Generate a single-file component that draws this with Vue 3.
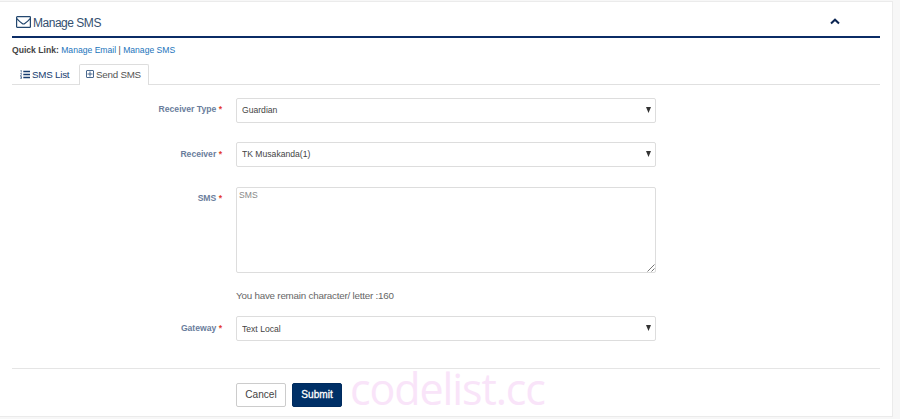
<script setup>
import { ref } from 'vue'

const receiverTypes = ['Guardian']
const receivers = ['TK Musakanda(1)']
const gateways = ['Text Local']
const message = ref('')
</script>

<template>
  <main class="panel">
    <header class="title">
      <svg class="mail" viewBox="0 0 15 12"><rect x=".6" y=".6" width="13.8" height="10.800" rx=".7" /><path d="M.8 2.700C2.500 4.800 4.500 6.300 6.200 7.500q1.300 1 2.600 0C10.500 6.300 12.500 4.800 14.200 2.700" /></svg>
      <h1>Manage SMS</h1>
      <svg class="chevron" viewBox="0 0 10 7"><path d="M1 5.500 5 1.700 9 5.500" /></svg>
    </header>
    <nav class="quick"><b>Quick Link:</b> <a>Manage Email</a> | <a>Manage SMS</a></nav>
    <nav class="tabs">
      <a class="tab">
        <svg class="list" viewBox="0 0 10 9"><path d="M3.300 1.500H10M3.300 4.500H10M3.300 7.500H10" /><path class="thin" d="M.5.7 1.300.3V2.500M.3 3.500H1.500V4.300L.3 5.500H1.600M.3 6.500H1.500V8.500H.3M.6 7.500H1.500" /></svg>
        SMS List
      </a>
      <a class="tab active">
        <svg class="plus" viewBox="0 0 8 8"><rect x=".5" y=".5" width="7" height="7" rx=".5" /><path d="M1.500 4H6.500M4 1.500V6.500" /></svg>
        Send SMS
      </a>
    </nav>
    <form @submit.prevent>
      <div class="row">
        <label>Receiver Type <i>*</i></label>
        <div class="select"><select><option v-for="o in receiverTypes" :key="o">{{ o }}</option></select><svg viewBox="0 0 5 6"><path d="M0 0H5L2.500 6Z" /></svg></div>
      </div>
      <div class="row second">
        <label>Receiver <i>*</i></label>
        <div class="select"><select><option v-for="o in receivers" :key="o">{{ o }}</option></select><svg viewBox="0 0 5 6"><path d="M0 0H5L2.500 6Z" /></svg></div>
      </div>
      <div class="row third">
        <label>SMS <i>*</i></label>
        <div class="area">
          <textarea v-model="message" placeholder="SMS"></textarea>
          <svg viewBox="0 0 8 8"><path d="M.5 7.500 7.500.500M4.500 7.500 7.500 4.500" /></svg>
        </div>
      </div>
      <p class="remain">You have remain character/ letter :160</p>
      <div class="row fourth">
        <label>Gateway <i>*</i></label>
        <div class="select"><select><option v-for="o in gateways" :key="o">{{ o }}</option></select><svg viewBox="0 0 5 6"><path d="M0 0H5L2.500 6Z" /></svg></div>
      </div>
      <footer>
        <button type="button">Cancel</button>
        <button class="submit">Submit</button>
        <span class="mark">codelist.cc</span>
      </footer>
    </form>
  </main>
</template>

<style>
body { background: #f7f7f7; }
</style>

<style scoped>
* { box-sizing: border-box; }
svg { fill: none; flex: none; }
.panel {
  width: 893px; height: 416px; margin-top: 1px; padding: 1px 12px 0;
  border: 1px solid #ebebeb; border-left: 0; background: #fff;
  font: 8.6px "Liberation Sans", Arial, sans-serif; color: #555;
  display: flex; flex-direction: column;
}
.title { height: 35px; display: flex; align-items: center; border-bottom: 2px solid #0b2c66; padding: 5px 40px 0 4px; color: #34506f; }
.mail { width: 15px; height: 12px; stroke: #23476f; stroke-width: 1.2; margin-right: 2px; }
h1 { margin: 2px 0 0; font-size: 12px; letter-spacing: -.48px; font-weight: 400; }
.chevron { width: 10px; height: 7px; margin: -1px 0 0 auto; stroke: #0b2552; stroke-width: 2; }
.quick { height: 26px; line-height: 24px; white-space: nowrap; color: #444; }
.quick a { color: #1c74bb; }
.tabs { height: 21px; display: flex; border-bottom: 1px solid #e0e0e0; font-size: 9.8px; letter-spacing: -.24px; }
.tab { height: 21px; width: 67px; display: flex; align-items: center; gap: 2px; padding: 0 0 1px 8px; color: #173d70; white-space: nowrap; }
.active { width: 70px; padding: 0 0 2px 6px; background: #fff; color: #555; border: 1px solid #ddd; border-bottom: 0; border-radius: 2px 2px 0 0; }
.list { width: 10px; height: 9px; stroke: #173d70; stroke-width: 1.4; }
.thin { stroke-width: .6; }
.plus { width: 8px; height: 8px; stroke: #355882; stroke-width: .9; }
form { padding-top: 13px; }
.row { display: flex; gap: 14px; }
label { width: 210px; text-align: right; font-size: 8.6px; font-weight: 700; line-height: 12px; padding-top: 5px; color: #6a7d9c; white-space: nowrap; }
label i { color: #e43b2f; font-style: normal; }
.select { position: relative; width: 420px; height: 25px; }
select, textarea { display: block; width: 100%; height: 100%; margin: 0; appearance: none; border: 1px solid #ddd; border-radius: 2px; background: #fff; color: #444; font: 8.6px "Liberation Sans", Arial, sans-serif; outline: 0; }
select { padding: 0 5px 2px; }
.select svg { position: absolute; right: 5px; top: 9px; width: 5px; height: 6px; fill: #333; }
.second { margin-top: 19px; }
.third { margin-top: 20px; }
.second label, .fourth label { padding-top: 6px; }
.fourth select { padding-bottom: 0; }
.area { position: relative; width: 420px; height: 86px; }
textarea { padding: 2px; resize: none; }
textarea::placeholder { color: #888; opacity: 1; }
.area svg { position: absolute; right: 1px; bottom: 1px; width: 8px; height: 8px; stroke: #666; stroke-width: .9; }
.remain { margin: 16px 0 14px 224px; height: 13px; line-height: 13px; font-size: 9.8px; letter-spacing: -.21px; color: #666; }
footer { margin-top: 27px; height: 48px; border-top: 1px solid #e5e5e5; padding: 14px 0 0 224px; display: flex; align-items: flex-start; }
button { width: 50px; height: 24px; margin: 0 6px 0 0; padding: 0 0 2px; border: 1px solid #ccc; border-radius: 2px; background: #fff; color: #444; font: 10.1px "Liberation Sans", Arial, sans-serif; }
.submit { border-color: #002b5e; background: #003067; color: #fff; -webkit-text-stroke: .3px #fff; }
.mark { margin: -24px 0 0 2px; font: 400 43px/60px "Open Sans", sans-serif; letter-spacing: -1.1px; color: #f9e4f9; white-space: nowrap; }
</style>
